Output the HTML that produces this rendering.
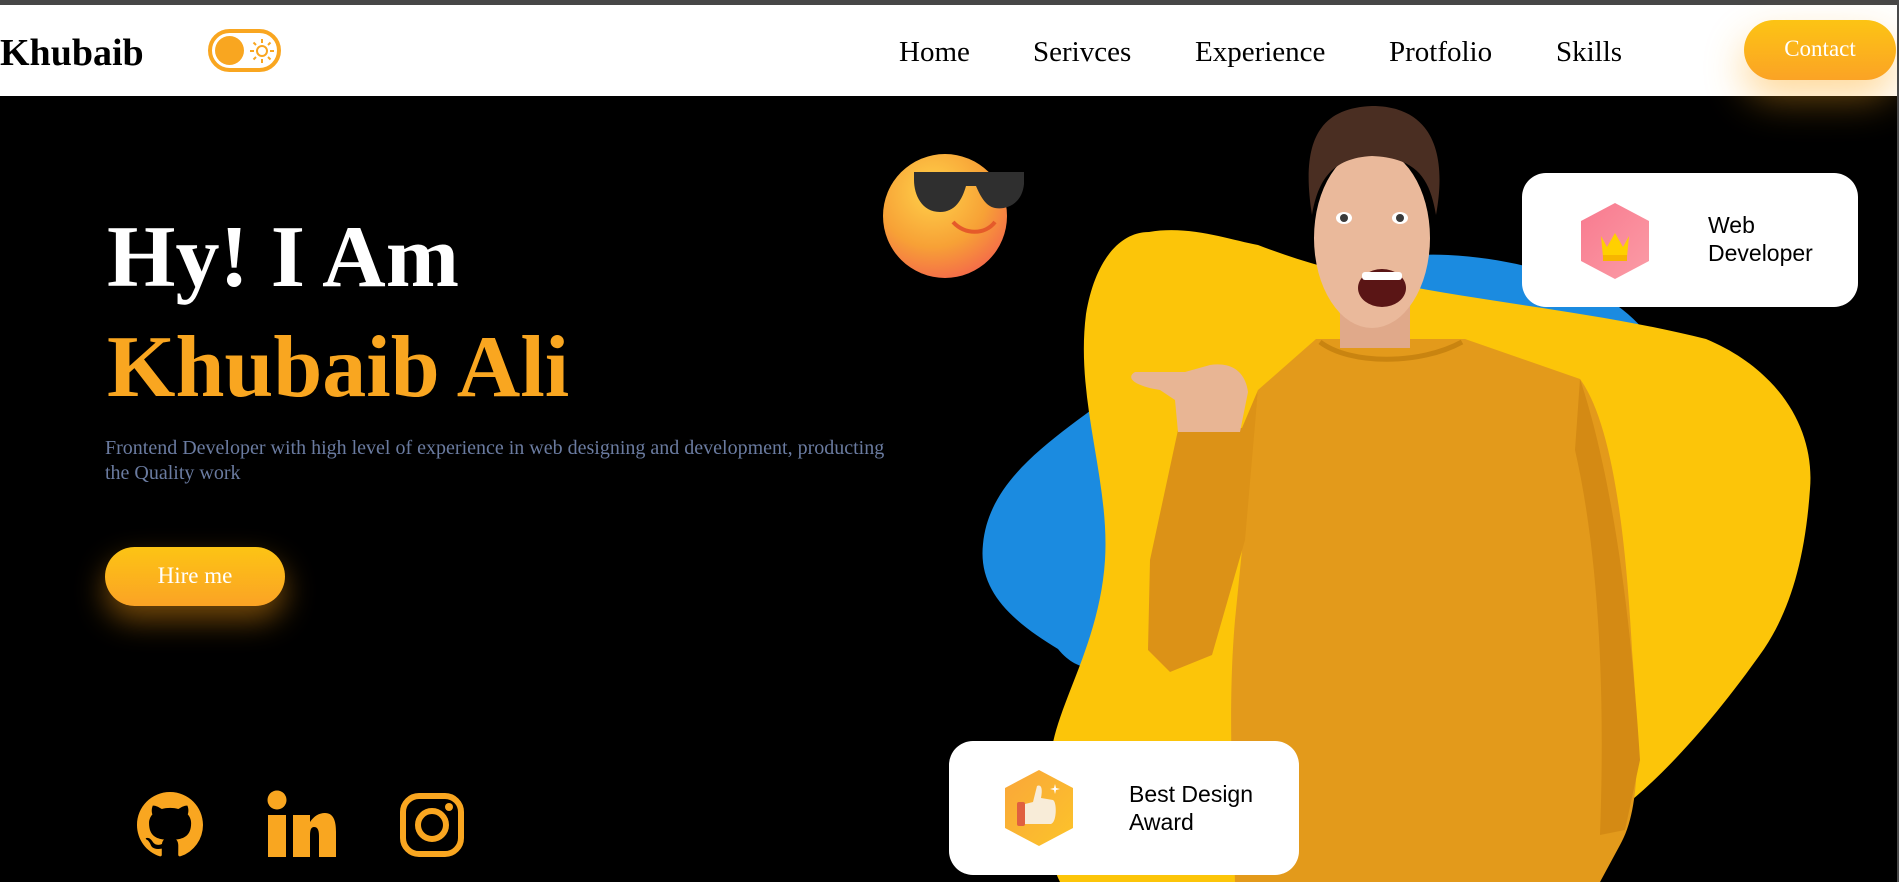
<!DOCTYPE html>
<html><head><meta charset="utf-8"><style>
*{margin:0;padding:0;box-sizing:border-box}
html,body{width:1899px;height:882px;overflow:hidden;background:#000;font-family:"Liberation Serif",serif}
.top{position:absolute;left:0;top:0;width:1899px;height:5px;background:#474747}
.rb{position:absolute;right:0;top:0;width:2px;height:882px;background:#4a4a4a;z-index:20}
header{position:absolute;left:0;top:5px;width:1899px;height:91px;background:#fff}
.logo{position:absolute;left:0;top:29px;font-weight:bold;font-size:38px;color:#000;line-height:1}
.tog{position:absolute;left:208px;top:24px;width:73px;height:43px;border:4px solid #f9a620;border-radius:22px}
.tog .c{position:absolute;left:3px;top:3px;width:29px;height:29px;border-radius:50%;background:#f9a620}
nav a{position:absolute;top:33px;font-size:29px;color:#000;text-decoration:none;line-height:1}
.contact{position:absolute;left:1744px;top:20px;width:152px;height:60px;border-radius:30px;background:linear-gradient(#fcc414,#fba325);color:#fff;font-size:23px;text-align:center;line-height:58px;box-shadow:0 18px 40px rgba(255,170,30,.45)}
h1{position:absolute;left:107px;font-size:88px;font-weight:bold;line-height:1;white-space:nowrap}
.p{position:absolute;left:105px;top:436px;width:800px;font-size:20px;line-height:25px;color:#6a7ba0}
.hire{position:absolute;left:105px;top:547px;width:180px;height:59px;border-radius:30px;background:linear-gradient(#fcc414,#fba325);color:#fff;font-size:23px;text-align:center;line-height:58px;box-shadow:0 14px 30px rgba(255,160,20,.45)}
.card{position:absolute;background:#fff;border-radius:24px;font-family:"Liberation Sans",sans-serif;font-size:23px;color:#000;line-height:28px}
</style></head><body>
<div class="top"></div><div class="rb"></div>
<header>
<div class="logo">Khubaib</div>
<div class="tog"><div class="c"></div>
<svg style="position:absolute;left:36px;top:4px" width="28" height="28" viewBox="0 0 28 28" fill="none" stroke="#f9a620" stroke-width="2"><circle cx="14" cy="14" r="5"/><path d="M14 2v4M14 22v4M2 14h4M22 14h4M5.5 5.5l2.5 2.5M20 20l2.5 2.5M5.5 22.5L8 20M20 8l2.5-2.5"/></svg></div>
<nav><a style="left:899px">Home</a><a style="left:1033px">Serivces</a><a style="left:1195px">Experience</a><a style="left:1389px">Protfolio</a><a style="left:1556px">Skills</a></nav>
</header>
<div class="contact">Contact</div>

<h1 style="top:214px;color:#fff">Hy! I Am</h1>
<h1 style="top:324px;color:#f9a620">Khubaib Ali</h1>
<div class="p">Frontend Developer with high level of experience in web designing and development, producting the Quality work</div>
<div class="hire">Hire me</div>

<svg style="position:absolute;left:0;top:0" width="1899" height="882">
<defs><radialGradient id="eg" cx="40%" cy="30%" r="75%"><stop offset="0" stop-color="#ffd24a"/><stop offset=".6" stop-color="#f7a136"/><stop offset="1" stop-color="#f4684a"/></radialGradient>
<linearGradient id="pk" x1="0" y1="0" x2="1" y2="1"><stop offset="0" stop-color="#f87a8f"/><stop offset="1" stop-color="#fb9ca6"/></linearGradient>
<linearGradient id="yl" x1="0" y1="0" x2="1" y2="1"><stop offset="0" stop-color="#f9a63a"/><stop offset="1" stop-color="#fcc42a"/></linearGradient></defs>
<path d="M983 544 C990 470 1070 430 1130 380 C1250 290 1360 250 1448 255 C1540 260 1610 290 1643 329 C1680 380 1500 470 1300 560 C1150 640 1100 700 1058 649 C1010 620 978 590 983 544Z" fill="#1b8be0"/>
<path d="M1086 314 C1095 260 1120 232 1149 232 C1190 225 1230 240 1258 245 C1400 300 1550 300 1706 339 C1780 370 1815 430 1810 489 C1805 560 1790 610 1764 649 C1700 740 1640 800 1591 830 C1500 870 1400 882 1304 882 L1060 882 C1040 840 1045 790 1052 748 C1060 700 1100 640 1105 560 C1110 480 1075 400 1086 314Z" fill="#fcc509"/>
<path d="M1316 339 L1465 339 L1580 379 C1610 420 1625 520 1632 650 C1640 750 1640 810 1620 845 L1600 882 L1235 882 C1232 780 1228 700 1235 620 L1258 390 Z" fill="#e39a1b"/>
<path d="M1258 390 L1245 540 L1212 655 L1170 672 L1148 650 L1150 560 L1178 430 L1242 428 Z" fill="#dc9217"/>
<path d="M1320 342 C1350 365 1420 365 1462 342" stroke="#c98410" stroke-width="5" fill="none"/>
<path d="M1580 379 C1610 470 1630 600 1640 760 L1625 830 L1600 835 C1605 700 1600 560 1575 450Z" fill="#d48a14"/>
<path d="M1178 432 L1240 432 L1248 392 C1245 370 1230 362 1210 365 L1185 372 L1135 372 C1125 378 1135 386 1160 390 L1175 400 Z" fill="#e8b594"/>
<rect x="1340" y="300" width="70" height="48" fill="#e0a98a"/>
<ellipse cx="1372" cy="238" rx="58" ry="90" fill="#eab99b"/>
<path d="M1312 215 C1300 140 1320 108 1372 106 C1430 106 1448 150 1436 215 C1430 180 1418 158 1372 156 C1332 158 1318 180 1312 215Z" fill="#4a2e22"/>
<ellipse cx="1344" cy="218" rx="8" ry="6" fill="#fff"/><circle cx="1344" cy="218" r="4" fill="#3a3a3a"/>
<ellipse cx="1400" cy="218" rx="8" ry="6" fill="#fff"/><circle cx="1400" cy="218" r="4" fill="#3a3a3a"/>
<ellipse cx="1382" cy="288" rx="24" ry="19" fill="#5a1515"/>
<rect x="1362" y="272" width="40" height="8" rx="3" fill="#fff"/>
<circle cx="945" cy="216" r="62" fill="url(#eg)"/>
<path d="M914 172 L1024 172 L1024 184 C1022 205 1005 210 995 208 C985 206 980 195 976 186 L966 186 C962 200 955 212 940 212 C922 212 914 195 914 180Z" fill="#2f2f2f"/>
<path d="M953 222 C965 235 985 235 995 222" stroke="#e55a2a" stroke-width="4" fill="none"/>
<g transform="translate(137 792) scale(4.125)"><path fill="#f9a620" d="M8 0C3.58 0 0 3.58 0 8c0 3.54 2.29 6.53 5.47 7.59.4.07.55-.17.55-.38 0-.19-.01-.82-.01-1.49-2.01.37-2.53-.49-2.69-.94-.09-.23-.48-.94-.82-1.13-.28-.15-.68-.52-.01-.53.63-.01 1.08.58 1.23.82.72 1.21 1.870.87 2.33.66.07-.52.28-.87.51-1.07-1.78-.2-3.64-.89-3.64-3.95 0-.87.31-1.59.82-2.15-.08-.2-.36-1.02.08-2.12 0 0 .67-.21 2.2.82.64-.18 1.32-.27 2-.27.68 0 1.36.09 2 .27 1.53-1.04 2.2-.82 2.2-.82.44 1.1.16 1.92.08 2.12.51.56.82 1.27.82 2.15 0 3.07-1.87 3.75-3.65 3.95.29.25.54.73.54 1.48 0 1.07-.01 1.93-.01 2.2 0 .21.15.46.55.38A8.013 8.013 0 0 0 16 8c0-4.42-3.58-8-8-8z"/></g>
<circle cx="277" cy="800" r="9.5" fill="#f9a620"/>
<rect x="268" y="815" width="18" height="42" fill="#f9a620"/>
<path d="M293 815 H310 V822 C314 816 319 813 325 813 C333 813 336 820 336 832 V857 H319 V836 C319 829 317 827 314 827 C311 827 310 830 310 836 V857 H293Z" fill="#f9a620"/>
<rect x="403" y="796" width="58" height="58" rx="16" fill="none" stroke="#f9a620" stroke-width="6"/>
<circle cx="432" cy="825" r="14" fill="none" stroke="#f9a620" stroke-width="6"/>
<circle cx="449" cy="807" r="4" fill="#f9a620"/>
</svg>

<div class="card" style="left:1522px;top:173px;width:336px;height:134px">
<svg style="position:absolute;left:57px;top:28px" width="72" height="80" viewBox="0 0 72 80"><path d="M36 2 L70 20 L70 60 L36 78 L2 60 L2 20Z" fill="url(#pk)"/><path d="M22 35 L28 46 L36 32 L44 46 L50 35 L48 56 L24 56Z" fill="#ffd000"/><rect x="24" y="54" width="24" height="6" fill="#f7b500"/></svg>
<div style="position:absolute;left:186px;top:38px">Web<br>Developer</div></div>

<div class="card" style="left:949px;top:741px;width:350px;height:134px">
<svg style="position:absolute;left:54px;top:27px" width="72" height="80" viewBox="0 0 72 80"><path d="M36 2 L70 20 L70 60 L36 78 L2 60 L2 20Z" fill="url(#yl)"/><rect x="14" y="34" width="8" height="24" rx="2" fill="#e06040"/><path d="M22 36 L30 34 L34 18 C38 16 40 20 38 30 L50 32 C54 34 54 54 48 56 L22 56Z" fill="#f8ecd8"/><path d="M52 16 l1 4 4 1 -4 1 -1 4 -1 -4 -4 -1 4 -1z" fill="#fff"/></svg>
<div style="position:absolute;left:180px;top:39px">Best Design<br>Award</div></div>
</body></html>
